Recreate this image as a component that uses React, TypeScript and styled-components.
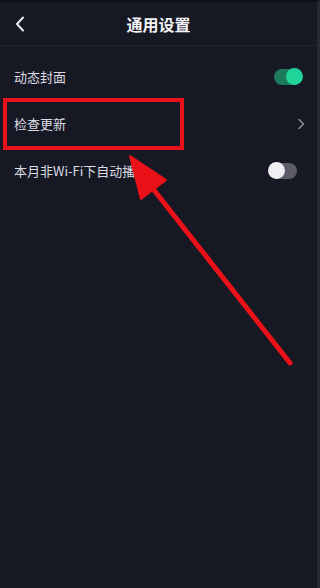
import React from 'react';
import styled, { createGlobalStyle } from 'styled-components';

const GlobalStyle = createGlobalStyle`
  html, body {
    margin: 0;
    padding: 0;
    background: #161824;
  }
  * {
    box-sizing: border-box;
  }
`;

const Screen = styled.div`
  position: relative;
  width: 320px;
  height: 588px;
  overflow: hidden;
  background: #161824;
  border-top: 2px solid #0e0f17;
  border-right: 3px solid #262833;
  font-family: "Noto Sans CJK SC", "Noto Sans", sans-serif;
  color: #e2e2e8;
`;

const Header = styled.header`
  position: relative;
  height: 44px;
  display: flex;
  align-items: center;
  justify-content: center;
  border-bottom: 1px solid #232532;
`;

const BackButton = styled.button`
  position: absolute;
  left: 9px;
  top: 50%;
  transform: translateY(-50%);
  width: 22px;
  height: 22px;
  padding: 0;
  border: none;
  background: none;
  display: flex;
  align-items: center;
  justify-content: center;
`;

const Title = styled.h1`
  margin: 0;
  font-size: 16px;
  font-weight: 700;
  color: #f4f4f6;
`;

const List = styled.div`
  display: flex;
  flex-direction: column;
  padding-top: 7px;
`;

const Row = styled.div`
  height: 47px;
  display: flex;
  align-items: center;
  justify-content: space-between;
  padding: 0 12px 0 14px;
`;

const Label = styled.span`
  font-size: 13px;
  color: #dcdce2;
`;

const Toggle = styled.div<{ $on: boolean }>`
  position: relative;
  width: 28px;
  height: 16px;
  margin-right: ${(p) => (p.$on ? '3px' : '8px')};
  border-radius: 8px;
  background: ${(p) => (p.$on ? '#1e7a5c' : '#5b5c68')};
`;

const Knob = styled.span<{ $on: boolean }>`
  position: absolute;
  top: 50%;
  left: ${(p) => (p.$on ? '12px' : '-1px')};
  width: 17px;
  height: 17px;
  margin-top: -8.5px;
  border-radius: 50%;
  background: ${(p) => (p.$on ? '#22d39a' : '#eeeef3')};
`;

const Highlight = styled.div`
  position: absolute;
  left: 3px;
  top: 96px;
  width: 181px;
  height: 52px;
  border: 4px solid #ea1218;
  pointer-events: none;
`;

const ArrowLayer = styled.svg`
  position: absolute;
  left: 0;
  top: 0;
  pointer-events: none;
`;

const Chevron = () => (
  <svg width="8" height="12" viewBox="0 0 8 12">
    <path d="M2 1.5 L6.5 6 L2 10.5" fill="none" stroke="#8a8b96" strokeWidth="1.6" strokeLinecap="round" strokeLinejoin="round" />
  </svg>
);

const App = () => {
  return (
    <>
      <GlobalStyle />
      <Screen>
        <Header>
          <BackButton aria-label="back">
            <svg width="12" height="16" viewBox="0 0 12 16">
              <path d="M9 1.5 L3 8 L9 14.5" fill="none" stroke="#e8e8ee" strokeWidth="2" strokeLinecap="round" strokeLinejoin="round" />
            </svg>
          </BackButton>
          <Title>通用设置</Title>
        </Header>
        <List>
          <Row>
            <Label>动态封面</Label>
            <Toggle $on>
              <Knob $on />
            </Toggle>
          </Row>
          <Row>
            <Label>检查更新</Label>
            <Chevron />
          </Row>
          <Row>
            <Label>本月非Wi-Fi下自动播放</Label>
            <Toggle $on={false}>
              <Knob $on={false} />
            </Toggle>
          </Row>
        </List>
        <Highlight />
        <ArrowLayer width="320" height="588" viewBox="0 0 320 588">
          <line x1="290" y1="361" x2="150" y2="183" stroke="#ea1218" strokeWidth="5" strokeLinecap="round" />
          <polygon points="130,154 166,178 141,197" fill="#ea1218" stroke="#ea1218" strokeWidth="2" strokeLinejoin="round" />
        </ArrowLayer>
      </Screen>
    </>
  );
};

export default App;
